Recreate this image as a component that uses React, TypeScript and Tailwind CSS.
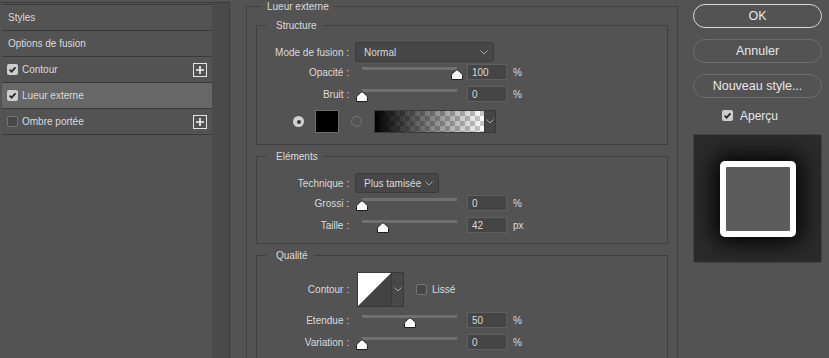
import React from "react";

const FONT = "font-['Liberation_Sans',Arial,sans-serif]";

function Chevron() {
  return (
    <svg width="8" height="5" viewBox="0 0 8 5" className="shrink-0">
      <path d="M0.5 0.5 L4 4 L7.5 0.5" fill="none" stroke="#a8a8a8" strokeWidth="1" />
    </svg>
  );
}

function Check({ checked }: { checked: boolean }) {
  return checked ? (
    <span className="w-[11px] h-[11px] rounded-[2px] bg-[#cdcdcd] flex items-center justify-center shrink-0">
      <svg width="9" height="9" viewBox="0 0 9 9">
        <path d="M1.6 4.6 L3.6 6.6 L7.5 2.3" fill="none" stroke="#2a2a2a" strokeWidth="1.8" />
      </svg>
    </span>
  ) : (
    <span className="block w-[11px] h-[11px] rounded-[2px] bg-[#474747] border border-[#747474] shrink-0" />
  );
}

function Plus() {
  return (
    <span className="w-[14px] h-[14px] border border-[#e4e4e4] flex items-center justify-center shrink-0">
      <svg width="10" height="10" viewBox="0 0 10 10">
        <path d="M5 1 V9 M1 5 H9" stroke="#f2f2f2" strokeWidth="1.6" />
      </svg>
    </span>
  );
}

function Thumb() {
  return (
    <svg width="12" height="11" viewBox="0 0 12 11">
      <path
        d="M0.5 10.5 V6.5 Q0.5 5.5 1.5 4.6 L5 1.3 Q6 0.4 7 1.3 L10.5 4.6 Q11.5 5.5 11.5 6.5 V10.5 Z"
        fill="#fafafa"
        stroke="#1e1e1e"
        strokeWidth="1"
      />
    </svg>
  );
}

function Slider({ pct }: { pct: number }) {
  return (
    <div className="relative w-[109px] h-[16px] ml-[6px] shrink-0">
      <div className="absolute left-[7px] right-[7px] top-[3px] h-[3px] bg-[#707070]" />
      <div className="absolute bottom-0 h-[11px]" style={{ left: 7 + pct * 95 - 6 }}>
        <Thumb />
      </div>
    </div>
  );
}

function Label({ text }: { text: string }) {
  return <span className="w-[92px] text-right shrink-0 whitespace-nowrap">{text}</span>;
}

function SliderRow({ label, pct, value, unit, mt }: { label: string; pct: number; value: string; unit: string; mt: string }) {
  return (
    <div className={`flex items-center h-[16px] ${mt}`}>
      <Label text={label} />
      <Slider pct={pct} />
      <div className="ml-[3px] w-[40px] h-[16px] bg-[#454545] border border-[#5f5f5f] pl-[4px] flex items-center shrink-0">
        {value}
      </div>
      <span className="ml-[6px]">{unit}</span>
    </div>
  );
}

function Dropdown({ text, w }: { text: string; w: string }) {
  return (
    <div className={`ml-[6px] h-[20px] ${w} bg-[#474747] border border-[#3a3a3a] rounded-[3px] pl-[8px] pr-[5px] flex items-center justify-between shrink-0`}>
      <span>{text}</span>
      <Chevron />
    </div>
  );
}

function Group({ title, children, pb, mt }: { title: string; children: React.ReactNode; pb: string; mt: string }) {
  return (
    <fieldset className={`border border-[#404040] pt-[10px] ${pb} ${mt}`}>
      <legend className="ml-[9px] pl-[10px] pr-[6px] leading-[13px]">{title}</legend>
      {children}
    </fieldset>
  );
}

function ListRow({ children, active }: { children: React.ReactNode; active?: boolean }) {
  return (
    <div className={`h-[26px] border-b border-[#3b3b3b] flex items-center ${active ? "bg-[#676767]" : ""}`}>
      {children}
    </div>
  );
}

export default function App() {
  return (
    <div className={`w-[829px] h-[358px] overflow-hidden bg-[#535353] text-[#dadada] text-[10px] flex ${FONT}`}>
      {/* Left list */}
      <div className="w-[230px] h-full pt-[2px] shrink-0">
        <div className="h-full border-t border-r border-[#3b3b3b] flex">
          <div className="w-[212px] pt-[1px] pl-[2px]">
            <div className="border-t border-[#3b3b3b]">
              <ListRow>
                <span className="pl-[6px]">Styles</span>
              </ListRow>
              <ListRow>
                <span className="pl-[6px]">Options de fusion</span>
              </ListRow>
              <ListRow>
                <div className="flex items-center w-full pl-[5px] pr-[5px]">
                  <Check checked />
                  <span className="ml-[4px] flex-1">Contour</span>
                  <Plus />
                </div>
              </ListRow>
              <ListRow active>
                <div className="flex items-center w-full pl-[5px] pr-[5px]">
                  <Check checked />
                  <span className="ml-[4px] flex-1">Lueur externe</span>
                </div>
              </ListRow>
              <ListRow>
                <div className="flex items-center w-full pl-[5px] pr-[5px]">
                  <Check checked={false} />
                  <span className="ml-[4px] flex-1">Ombre portée</span>
                  <Plus />
                </div>
              </ListRow>
            </div>
          </div>
          <div className="w-[17px] h-full bg-[#4a4a4a]" />
        </div>
      </div>

      {/* Middle settings */}
      <div className="w-[448px] shrink-0 pl-[16px]">
        <fieldset className="w-[432px] h-[420px] border border-[#404040] px-[9px] pt-[6px]">
          <legend className="ml-[6px] px-[5px] leading-[13px]">Lueur externe</legend>

          <Group title="Structure" pb="pb-[11px]" mt="">
            <div className="flex items-center h-[20px]">
              <Label text="Mode de fusion :" />
              <Dropdown text="Normal" w="w-[139px]" />
            </div>
            <SliderRow label="Opacité :" pct={1} value="100" unit="%" mt="mt-[2px]" />
            <SliderRow label="Bruit :" pct={0} value="0" unit="%" mt="mt-[6px]" />
            <div className="flex items-center h-[23px] mt-[8px]">
              <span className="ml-[36px] w-[11px] h-[11px] rounded-full bg-[#d2d2d2] flex items-center justify-center shrink-0">
                <span className="w-[4px] h-[4px] rounded-full bg-[#3a3a3a]" />
              </span>
              <span className="ml-[11px] w-[24px] h-[23px] bg-black border border-[#6a6a6a] shrink-0" />
              <span className="ml-[12px] w-[11px] h-[11px] rounded-full border border-[#767676] shrink-0" />
              <div className="ml-[12px] h-[23px] w-[122px] flex border border-[#3a3a3a] shrink-0">
                <div className="w-[109px] h-full bg-[image:repeating-conic-gradient(#c9c9c9_0_25%,#ffffff_0_50%)] bg-[length:10px_10px]">
                  <div className="w-full h-full bg-linear-to-r from-black to-transparent" />
                </div>
                <div className="flex-1 bg-[#454545] border-l border-[#3a3a3a] flex items-center justify-center">
                  <Chevron />
                </div>
              </div>
            </div>
          </Group>

          <Group title="Eléments" pb="pb-[10px]" mt="mt-[5px]">
            <div className="flex items-center h-[20px]">
              <Label text="Technique :" />
              <Dropdown text="Plus tamisée" w="w-[84px]" />
            </div>
            <SliderRow label="Grossi :" pct={0} value="0" unit="%" mt="mt-[2px]" />
            <SliderRow label="Taille :" pct={0.22} value="42" unit="px" mt="mt-[6px]" />
          </Group>

          <Group title="Qualité" pb="pb-[10px]" mt="mt-[5px]">
            <div className="flex items-center h-[35px]">
              <Label text="Contour :" />
              <div className="ml-[8px] w-[47px] h-[35px] flex border border-[#3a3a3a] shrink-0">
                <div className="w-[33px] h-full bg-[#434343]">
                  <svg width="33" height="33" viewBox="0 0 33 33" preserveAspectRatio="none" className="w-full h-full">
                    <polygon points="0,0 33,0 0,33" fill="#ffffff" />
                  </svg>
                </div>
                <div className="flex-1 bg-[#484848] border-l border-[#3a3a3a] flex items-center justify-center">
                  <Chevron />
                </div>
              </div>
              <span className="ml-[12px] flex items-center">
                <Check checked={false} />
              </span>
              <span className="ml-[5px]">Lissé</span>
            </div>
            <SliderRow label="Etendue :" pct={0.5} value="50" unit="%" mt="mt-[5px]" />
            <SliderRow label="Variation :" pct={0} value="0" unit="%" mt="mt-[6px]" />
          </Group>
        </fieldset>
      </div>

      {/* Right column */}
      <div className="ml-[15px] w-[129px] pt-[4px] shrink-0 flex flex-col text-[12.5px] text-[#e6e6e6]">
        <button className="h-[24px] w-full rounded-full border border-[#d8d8d8] flex items-center justify-center">OK</button>
        <button className="mt-[11px] h-[24px] w-full rounded-full border border-[#6c6c6c] flex items-center justify-center">Annuler</button>
        <button className="mt-[11px] h-[24px] w-full rounded-full border border-[#6c6c6c] flex items-center justify-center">Nouveau style...</button>
        <div className="mt-[12px] h-[11px] flex items-center pl-[29px] text-[12px]">
          <Check checked />
          <span className="ml-[7px]">Aperçu</span>
        </div>
        <div className="mt-[13px] h-[129px] w-full bg-[#2b2b2b] border border-[#454545] flex items-center justify-center">
          <div className="w-[76px] h-[76px] rounded-[5px] bg-white p-[6px] shadow-[0_0_22px_6px_rgba(0,0,0,0.95)]">
            <div className="w-full h-full bg-[#5c5c5c] rounded-[1px]" />
          </div>
        </div>
      </div>
    </div>
  );
}
